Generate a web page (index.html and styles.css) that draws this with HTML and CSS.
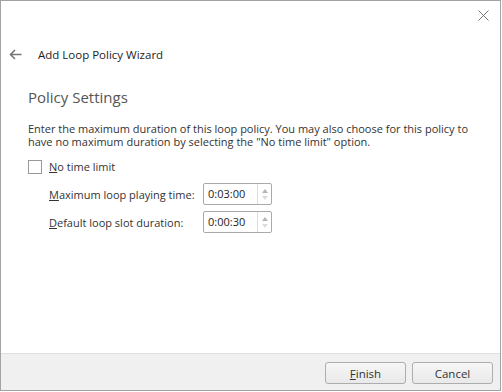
FILE: index.html
```html
<!DOCTYPE html>
<html lang="en">
<head>
  <meta charset="UTF-8" />
  <title>Add Loop Policy Wizard</title>
  <link rel="stylesheet" href="styles.css">
</head>
<body>
  <div class="dialog">
    <div class="titlebar">
      <svg class="close" width="11" height="11" viewBox="0 0 11 11">
        <path d="M0.5 0.5 L10.5 10.5 M10.5 0.5 L0.5 10.5" stroke="#777" stroke-width="1" fill="none"/>
      </svg>
    </div>
    <div class="header">
      <svg class="back" width="13" height="11" viewBox="0 0 13 11">
        <path d="M12.5 5.5 H1.5 M6 1 L1.5 5.5 L6 10" stroke="#777" stroke-width="1.6" fill="none"/>
      </svg>
      <span class="wizard-title">Add Loop Policy Wizard</span>
    </div>

    <div class="content">
      <h2>Policy Settings</h2>
      <p class="desc">Enter the maximum duration of this loop policy. You may also choose for this policy to have no maximum duration by selecting the "No time limit" option.</p>

      <label class="check-row">
        <span class="checkbox"></span>
        <span><u>N</u>o time limit</span>
      </label>

      <div class="fields">
        <div class="field">
          <span class="label"><u>M</u>aximum loop playing time:</span>
          <div class="spin">
            <span class="value">0:03:00</span>
            <span class="arrows">
              <span class="up"></span>
              <span class="down"></span>
            </span>
          </div>
        </div>
        <div class="field">
          <span class="label"><u>D</u>efault loop slot duration:</span>
          <div class="spin">
            <span class="value">0:00:30</span>
            <span class="arrows">
              <span class="up"></span>
              <span class="down"></span>
            </span>
          </div>
        </div>
      </div>
    </div>

    <div class="footer">
      <button><u>F</u>inish</button>
      <button>Cancel</button>
    </div>
  </div>
</body>
</html>
```

FILE: styles.css
```css
body {
  margin: 0;
  background: #fff;
  font-family: "Open Sans", "DejaVu Sans", sans-serif;
  color: #222;
}

.dialog {
  width: 499px;
  height: 389px;
  border: 1px solid #a3a3a3;
  background: #fff;
  display: flex;
  flex-direction: column;
}

.titlebar {
  height: 30px;
  display: flex;
  justify-content: flex-end;
  align-items: flex-start;
}

.close {
  margin: 9px 11px 0 0;
}

.header {
  display: flex;
  align-items: center;
  height: 20px;
  margin-top: 13px;
  padding-left: 8px;
}

.back {
  margin-right: 16px;
}

.wizard-title {
  font-size: 11.5px;
  color: #1e1e1e;
}

.content {
  flex: 1;
  padding: 23px 0 0 27px;
}

h2 {
  margin: 0;
  font-weight: normal;
  font-size: 15px;
  color: #555;
}

.desc {
  margin: 16px 16px 0 0;
  font-size: 11px;
  line-height: 12.5px;
  color: #333;
}

.check-row {
  display: flex;
  align-items: center;
  margin-top: 11px;
  font-size: 11px;
  color: #333;
}

.checkbox {
  width: 12px;
  height: 12px;
  border: 1px solid #999;
  background: #fff;
  margin: 0 7px 0 0;
}

.fields {
  padding-left: 21px;
  margin-top: 9px;
  display: flex;
  flex-direction: column;
  gap: 6px;
}

.field {
  display: flex;
  align-items: center;
  font-size: 11px;
  color: #333;
}

.label {
  width: 154px;
}

.spin {
  width: 67px;
  height: 20px;
  border: 1px solid #aaa;
  border-radius: 2px;
  display: flex;
  background: #fff;
}

.value {
  flex: 1;
  padding-left: 4px;
  line-height: 20px;
  color: #222;
}

.arrows {
  width: 13px;
  border-left: 1px solid #ddd;
  display: flex;
  flex-direction: column;
  justify-content: center;
  align-items: center;
  gap: 3px;
}

.up {
  width: 0;
  height: 0;
  border-left: 3px solid transparent;
  border-right: 3px solid transparent;
  border-bottom: 4px solid #b5b5b5;
}

.down {
  width: 0;
  height: 0;
  border-left: 3px solid transparent;
  border-right: 3px solid transparent;
  border-top: 4px solid #dcdcdc;
}

.footer {
  height: 37px;
  border-top: 1px solid #dfdfdf;
  background: #f0f0f0;
  display: flex;
  justify-content: flex-end;
  align-items: flex-start;
  gap: 6px;
  padding: 8px 7px 0 0;
  box-sizing: border-box;
}

button {
  width: 81px;
  height: 22px;
  border: 1px solid #adadad;
  border-radius: 3px;
  background: linear-gradient(#f6f6f6, #e9e9e9);
  font-family: "Open Sans", "DejaVu Sans", sans-serif;
  font-size: 11.5px;
  color: #333;
  padding: 0;
}
```
